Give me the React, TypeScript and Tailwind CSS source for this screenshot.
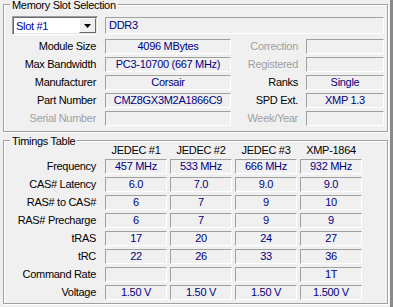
import type { JSX, ReactNode } from 'react';
import clsx from 'clsx';

const SLOT_ROWS = [
  { label: 'Module Size', value: '4096 MBytes', side: 'Correction', sideValue: '', off: false, sideOff: true },
  { label: 'Max Bandwidth', value: 'PC3-10700 (667 MHz)', side: 'Registered', sideValue: '', off: false, sideOff: true },
  { label: 'Manufacturer', value: 'Corsair', side: 'Ranks', sideValue: 'Single', off: false, sideOff: false },
  { label: 'Part Number', value: 'CMZ8GX3M2A1866C9', side: 'SPD Ext.', sideValue: 'XMP 1.3', off: false, sideOff: false },
  { label: 'Serial Number', value: '', side: 'Week/Year', sideValue: '', off: true, sideOff: true },
];

const COLUMNS = ['JEDEC #1', 'JEDEC #2', 'JEDEC #3', 'XMP-1864'];

const TIMINGS = [
  { label: 'Frequency', values: ['457 MHz', '533 MHz', '666 MHz', '932 MHz'] },
  { label: 'CAS# Latency', values: ['6.0', '7.0', '9.0', '9.0'] },
  { label: 'RAS# to CAS#', values: ['6', '7', '9', '10'] },
  { label: 'RAS# Precharge', values: ['6', '7', '9', '9'] },
  { label: 'tRAS', values: ['17', '20', '24', '27'] },
  { label: 'tRC', values: ['22', '26', '33', '36'] },
  { label: 'Command Rate', values: ['', '', '', '1T'] },
  { label: 'Voltage', values: ['1.50 V', '1.50 V', '1.50 V', '1.500 V'] },
];

function Field({ children, className }: { children?: ReactNode; className?: string }): JSX.Element {
  return (
    <div
      className={clsx(
        'h-[15px] shrink-0 border border-t-[#a0a0a0] border-l-[#a0a0a0] border-r-white border-b-white',
        'text-[#000080] leading-[13px] whitespace-nowrap overflow-hidden text-center',
        className,
      )}
    >
      {children}
    </div>
  );
}

function Label({ children, off, className }: { children: ReactNode; off?: boolean; className?: string }): JSX.Element {
  return (
    <div className={clsx('shrink-0 text-right leading-[15px] whitespace-nowrap', off ? 'text-[#a0a0a0]' : 'text-black', className)}>
      {children}
    </div>
  );
}

function Group({ title, className, children }: { title: string; className?: string; children: ReactNode }): JSX.Element {
  return (
    <div className={clsx('relative ml-[3px] w-[385px] border border-[#a0a0a0] shadow-[inset_1px_1px_0_#fff,1px_1px_0_#fff]', className)}>
      <span className="absolute left-[6px] top-[-5px] bg-[#f0f0f0] px-[2px] leading-[11px] text-black">{title}</span>
      {children}
    </div>
  );
}

function SlotCombo(): JSX.Element {
  return (
    <div className="flex h-[19px] w-[86px] shrink-0 border border-t-[#a0a0a0] border-l-[#a0a0a0] border-r-white border-b-white bg-white shadow-[inset_1px_1px_0_#696969,inset_-1px_-1px_0_#e3e3e3]">
      <div className="flex-1 pl-[3px] pt-[1px] leading-[16px] text-[#0000a8]">Slot #1</div>
      <div className="mr-[1px] mt-[1px] flex h-[15px] w-[17px] items-center justify-center border border-t-white border-l-white border-r-[#696969] border-b-[#696969] bg-[#f0f0f0]">
        <svg width="7" height="4" viewBox="0 0 7 4">
          <polygon points="0,0 7,0 3.5,4" fill="#000" />
        </svg>
      </div>
    </div>
  );
}

export default function App(): JSX.Element {
  return (
    <div
      className="h-[307px] w-[393px] overflow-hidden border-r-[3px] border-[#8a8a8a] bg-[#f0f0f0] text-[11px] tracking-[-0.3px]"
      style={{ fontFamily: '"Liberation Sans", Arial, sans-serif' }}
    >
      <div className="h-[4px]" />

      {/* Memory slot selection */}
      <Group title="Memory Slot Selection" className="h-[128px]">
        <div className="flex flex-col gap-[3px] pl-[8px] pt-[11px]">
          <div className="mb-[1px] flex items-center">
            <SlotCombo />
            <Field className="ml-[7px] h-[17px] w-[279px] pl-[3px] text-left leading-[15px]">DDR3</Field>
          </div>
          {SLOT_ROWS.map(row => (
            <div key={row.label} className="flex items-center">
              <Label off={row.off} className="w-[84px]">{row.label}</Label>
              <Field className="ml-[9px] w-[126px]">{row.value}</Field>
              <Label off={row.sideOff} className="w-[67px]">{row.side}</Label>
              <Field className="ml-[8px] w-[78px]">{row.sideValue}</Field>
            </div>
          ))}
        </div>
      </Group>

      {/* Timings table */}
      <Group title="Timings Table" className="mt-[8px] h-[164px]">
        <div className="flex flex-col pl-[8px] pt-[1px]">
          <div className="flex h-[17px] items-center">
            <div className="w-[93px] shrink-0" />
            <div className="flex gap-[3px]">
              {COLUMNS.map(c => (
                <div key={c} className="w-[62px] text-center leading-[15px] text-black">{c}</div>
              ))}
            </div>
          </div>
          <div className="flex flex-col gap-[3px]">
            {TIMINGS.map(row => (
              <div key={row.label} className="flex items-center">
                <Label className="w-[84px]">{row.label}</Label>
                <div className="ml-[9px] flex gap-[3px]">
                  {row.values.map((v, i) => (
                    <Field key={i} className="w-[62px]">{v}</Field>
                  ))}
                </div>
              </div>
            ))}
          </div>
        </div>
      </Group>
    </div>
  );
}
